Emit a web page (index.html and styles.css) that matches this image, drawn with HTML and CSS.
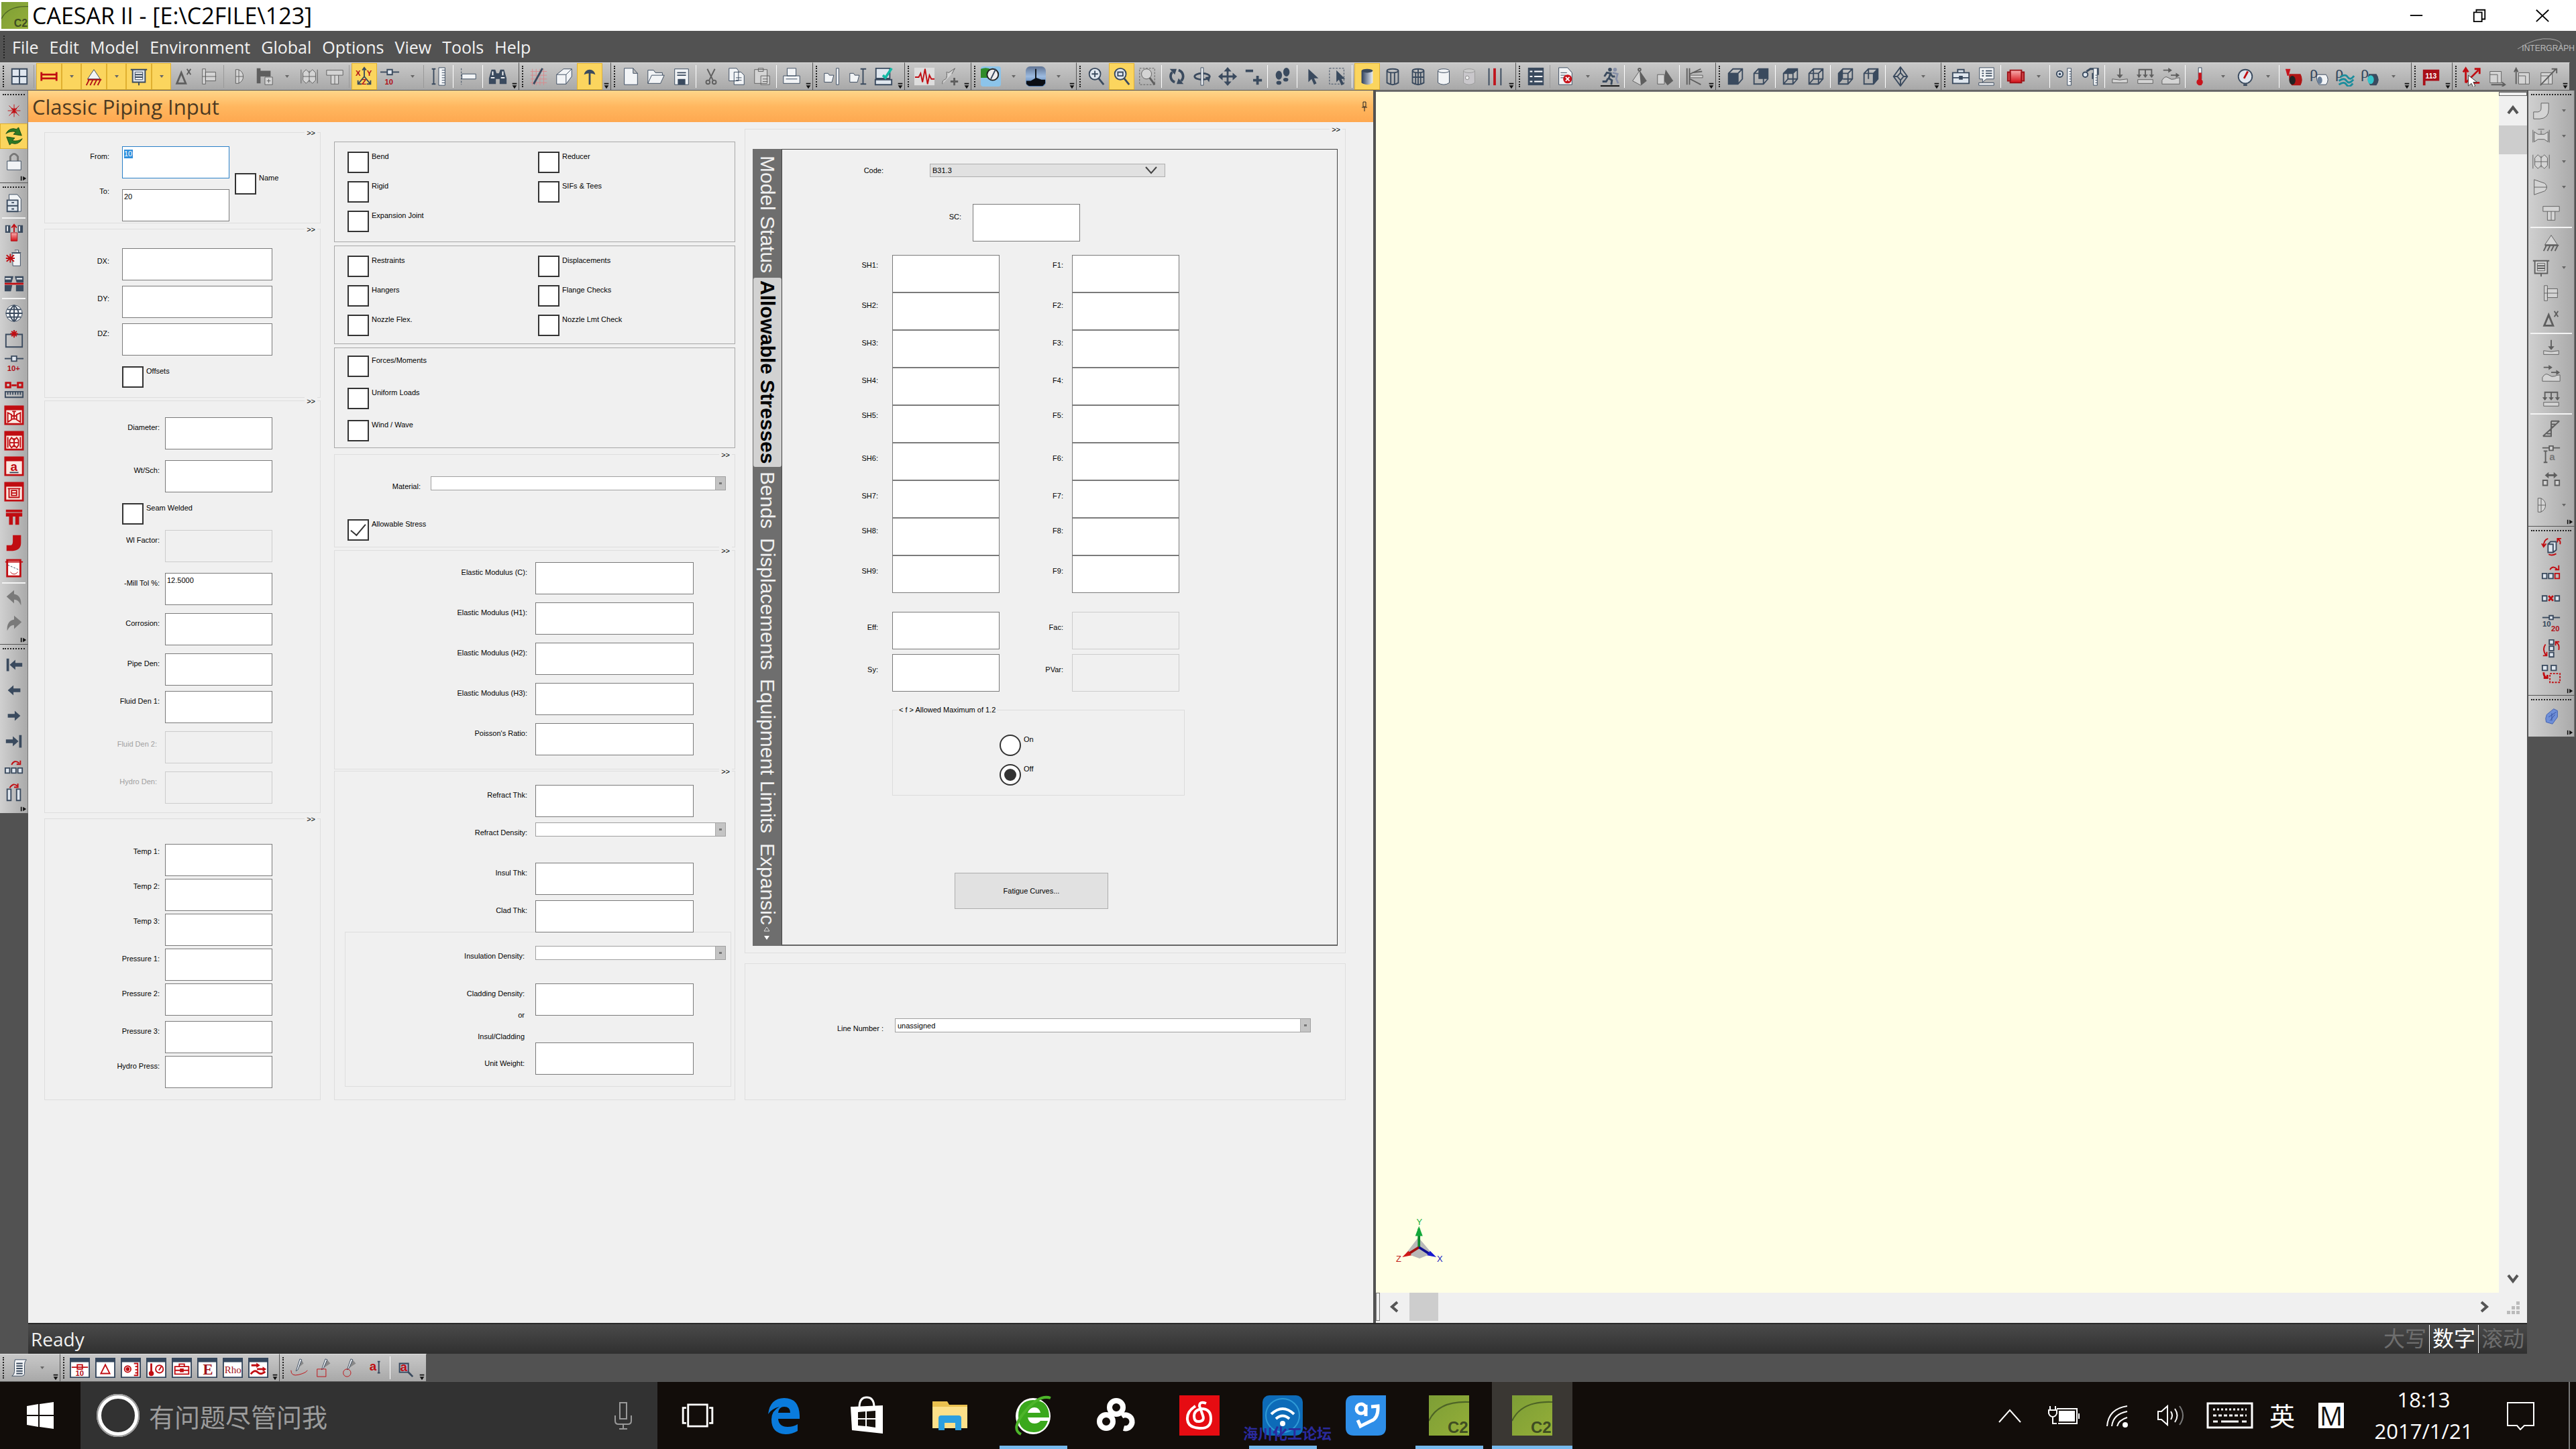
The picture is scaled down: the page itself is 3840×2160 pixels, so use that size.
FILE: index.html
```html
<!DOCTYPE html>
<html lang="zh-CN">
<head>
<meta charset="utf-8">
<title>CAESAR II</title>
<link rel="stylesheet" href="styles.css">
</head>
<body>
<svg class="paints" aria-hidden="true">
<defs>
<linearGradient id="g-cyl"><stop offset="0" stop-color="#2d3f5c"/><stop offset="1" stop-color="#e8eef6"/></linearGradient>
<linearGradient id="g-red" x2="0" y2="1"><stop offset="0" stop-color="#f7b0b0"/><stop offset="1" stop-color="#d40d14"/></linearGradient>
<linearGradient id="g-c2" x2="1" y2="1"><stop offset="0" stop-color="#7d9e36"/><stop offset="1" stop-color="#94ae38"/></linearGradient>
<linearGradient id="g-sky" x2="0" y2="1"><stop offset="0" stop-color="#5f7393"/><stop offset=".5" stop-color="#9dbbe0"/><stop offset="1" stop-color="#3d6ea8"/></linearGradient>
</defs>
</svg>
<svg class="sprite" aria-hidden="true">
<symbol id="win" viewBox="0 0 32 32"><path class="w2" d="M4 4h24v24H4zM16 4v24M4 16h24"/></symbol>
<symbol id="pipe" viewBox="0 0 32 32"><path class="r3" d="M5 13h22M5 19h22M4 9v14M28 9v14"/></symbol>
<symbol id="restr" viewBox="0 0 32 32"><path class="w" d="M16 5l10 15H6z"/><path class="hat" d="M4 30l4-8M10 30l4-8M16 30l4-8M22 30l4-8M6 21h22"/></symbol>
<symbol id="hanger" viewBox="0 0 32 32"><path class="w2" d="M3 5h26M6 5v20h20V5M16 25v5"/><path class="w" d="M10 9h12v12H10z"/><path class="l" d="M10 13h12M10 17h12"/></symbol>
<symbol id="dx" viewBox="0 0 32 32"><path class="l3" d="M5 27L12 10l7 17z"/><path class="l" d="M21 4l6 9M27 4l-6 9"/></symbol>
<symbol id="flange" viewBox="0 0 32 32"><path class="w" d="M5 4h5v24H5zM10 9h16v14H10zM5 16h22"/></symbol>
<symbol id="cap" viewBox="0 0 32 32"><path class="w" d="M11 5h4q8 3 8 11t-8 11h-4zM16 5v22M11 16h12"/></symbol>
<symbol id="flangeadd" viewBox="0 0 32 32"><path class="f" d="M4 3h6v24H4zM10 7h16v9H10z"/><path class="w" d="M17 17h12v12H17zM20 23h6M23 20v6"/></symbol>
<symbol id="bellows" viewBox="0 0 32 32"><path class="w" d="M3 5v22M29 5v22M6 10l5-5 5 5 5-5 5 5v12l-5 5-5-5-5 5-5-5zM16 7v18M6 16h20"/></symbol>
<symbol id="tee" viewBox="0 0 32 32"><path class="w" d="M3 6h26v8h-7v14H10V14H3zM10 14h12M16 14v14"/></symbol>
<symbol id="xyz" viewBox="0 0 32 32"><path class="l" d="M16 3v13L7 27M16 16l9 11M13 6l3-4 3 4M6 22v6h6M26 22v6h-6"/><text class="tr" x="2" y="15">X</text><text class="tr" x="20" y="15">Y</text><text class="tr" x="12" y="29">Z</text></symbol>
<symbol id="node10" viewBox="0 0 32 32"><path class="l" d="M1 9h30"/><path class="w2" d="M12 5h8v8h-8z"/><text class="tr" x="8" y="29">10</text></symbol>
<symbol id="ruler" viewBox="0 0 32 32"><path class="l" d="M8 4v24M5 4h6M5 28h6"/><path class="w" d="M16 2h10v28H16zM21 6h5M21 10h5M21 14h5M21 18h5M21 22h5M21 26h5"/></symbol>
<symbol id="pipeend" viewBox="0 0 32 32"><path class="l dash" d="M5 3v26"/><path class="w" d="M6 12h22v8H6z"/></symbol>
<symbol id="binoc" viewBox="0 0 32 32"><path class="f" d="M6 5h6l2 6h4l2-6h6l4 14v9H19v-8h-6v8H2v-9z"/><path class="wl" d="M5 18h6M21 18h6M8 8v6M24 8v6"/></symbol>
<symbol id="grid" viewBox="0 0 32 32"><path class="pk" d="M6 4v26M12 4v26M18 4v26M24 4v26M3 8h26M3 14h26M3 20h26M3 26h26"/><path class="l3" d="M22 3L8 28"/></symbol>
<symbol id="box" viewBox="0 0 32 32"><path class="w" d="M4 13h15v15H4zM4 13L15 4h13v12L19 28M19 13l9-9"/></symbol>
<symbol id="tmark" viewBox="0 0 32 32"><path class="l3" d="M16 7v22"/><path class="f" d="M7 13q2-8 9-8t9 8q-9-4-18 0z"/></symbol>
<symbol id="doc" viewBox="0 0 32 32"><path class="w" d="M6 3h14l7 8v18H6zM20 3v8h7"/></symbol>
<symbol id="open" viewBox="0 0 32 32"><path class="w" d="M3 27V6h9l3 4h11v4M3 27l6-13h20l-6 13z"/></symbol>
<symbol id="save" viewBox="0 0 32 32"><path class="w" d="M5 4h22v25H5z"/><path class="l" d="M9 10h14M9 14h14"/><path class="f" d="M10 20h12v9H10z"/></symbol>
<symbol id="cut" viewBox="0 0 32 32"><path class="l" d="M10 4l9 18M22 4l-9 18"/><circle class="l" cx="11" cy="25" r="3"/><circle class="l" cx="21" cy="25" r="3"/></symbol>
<symbol id="copy" viewBox="0 0 32 32"><path class="w" d="M4 3h12l3 4v16H4zM12 9h11l5 5v15H12zM15 18h9M15 22h9"/></symbol>
<symbol id="paste" viewBox="0 0 32 32"><path class="w" d="M4 5h20v22H4zM10 3h8v5h-8zM14 15h14v14H14zM17 20h8M17 24h8"/></symbol>
<symbol id="print" viewBox="0 0 32 32"><path class="w" d="M9 3h14v12H9zM3 15h26v12H3zM7 20h18"/></symbol>
<symbol id="fl1" viewBox="0 0 32 32"><path class="w" d="M3 11h6l2 3h7l-3 11H3z"/><path class="w" d="M22 3h4v26h-4z"/></symbol>
<symbol id="fl2" viewBox="0 0 32 32"><path class="w" d="M3 11h6l2 3h7l-3 11H3z"/><path class="l" d="M20 4h9M24 4v24M20 28h9"/></symbol>
<symbol id="chk" viewBox="0 0 32 32"><path class="w2" d="M4 3h22v16H4zM3 21h26v8H3z"/><path d="M15 14l4 4L29 3" fill="none" stroke="#13b9a5" stroke-width="4"/></symbol>
<symbol id="pulse" viewBox="0 0 32 32"><path d="M0 2h32v28H0z" fill="#ddd"/><path class="r" d="M1 17h6l3-6 3 14 4-21 4 24 3-14 3 6h5"/></symbol>
<symbol id="curve" viewBox="0 0 32 32"><path class="w" d="M4 28c0-10 6-4 7-12S8 8 14 10l10-7-5 9"/><path class="l3" d="M23 18v12M17 24h12"/></symbol>
<symbol id="paint" viewBox="0 0 32 32"><rect width="32" height="32" rx="4" fill="#8cc4ea"/><path d="M0 4q10-4 18 2l-4 12H0z" fill="#2f8b2a"/><circle cx="19" cy="13" r="9" fill="#eee" stroke="#222" stroke-width="2"/><path class="l" d="M16 20l8-16"/></symbol>
<symbol id="ship" viewBox="0 0 32 32"><rect width="32" height="32" rx="7" fill="url(#g-sky)"/><path d="M1 23h7l7-4V4h2v14l8 3h6v6l-4 4H5l-4-3z" fill="#0a0e14"/></symbol>
<symbol id="zoomx" viewBox="0 0 32 32"><circle class="w2" cx="14" cy="12" r="9"/><path class="l3" d="M20 19l8 10"/><path class="l" d="M14 7v10M9 12h10"/></symbol>
<symbol id="zoomw" viewBox="0 0 32 32"><circle class="w2" cx="14" cy="12" r="9"/><path class="l3" d="M20 19l8 10"/><path class="l" d="M10 9h8v6h-8z"/></symbol>
<symbol id="zoomd" viewBox="0 0 32 32"><path class="l dash" d="M4 3h24v26H4z"/><circle class="w" cx="15" cy="12" r="8"/><path class="l3" d="M20 18l8 11"/></symbol>
<symbol id="rot" viewBox="0 0 32 32"><path class="l4" d="M13 25A10 10 0 0 1 9 9M19 6a10 10 0 0 1 4 17"/><path class="f" d="M5 4h11l-3 9zM27 28H16l3-9z"/></symbol>
<symbol id="orbit" viewBox="0 0 32 32"><ellipse class="l3" cx="16" cy="16" rx="12" ry="5"/><path class="w" d="M14 2h4v28h-4z"/><path class="f" d="M21 17l6 8 2-9z"/></symbol>
<symbol id="move" viewBox="0 0 32 32"><path class="l3" d="M16 5v22M5 16h22"/><path class="f" d="M16 1l6 7H10zM16 31l6-7H10zM1 16l7-6v12zM31 16l-7-6v12z"/></symbol>
<symbol id="pm" viewBox="0 0 32 32"><path class="l4" d="M4 7h12M23 15v14M16 22h14"/></symbol>
<symbol id="feet" viewBox="0 0 32 32"><ellipse class="f" cx="10" cy="14" rx="5" ry="7"/><ellipse class="f" cx="10" cy="26" rx="4" ry="3"/><ellipse class="f" cx="22" cy="9" rx="5" ry="7"/><ellipse class="f" cx="21" cy="21" rx="4" ry="3"/></symbol>
<symbol id="cur" viewBox="0 0 32 32"><path class="f" d="M10 4v21l5-5 4 9 4-2-4-8h7z"/></symbol>
<symbol id="curd" viewBox="0 0 32 32"><path class="l dash" d="M3 3h23v25H3z"/><path class="f" d="M14 6v19l4-4 4 9 4-2-4-8h6z"/></symbol>
<symbol id="cyl" viewBox="0 0 32 32"><path d="M7 7v19q9 6 18 0V7z" fill="url(#g-cyl)"/><ellipse class="f" cx="16" cy="7" rx="9" ry="3"/></symbol>
<symbol id="cylo" viewBox="0 0 32 32"><path class="l" d="M7 7v19q9 6 18 0V7M13 10v18M19 10v18"/><ellipse class="l" cx="16" cy="7" rx="9" ry="3"/></symbol>
<symbol id="cylg" viewBox="0 0 32 32"><path class="l" d="M7 7v19q9 6 18 0V7M16 4v26M7 17h18M12 10v18M20 10v18"/><ellipse class="l" cx="16" cy="7" rx="9" ry="3"/></symbol>
<symbol id="cylw" viewBox="0 0 32 32"><path class="w" d="M7 7v19q9 6 18 0V7z"/><ellipse class="w" cx="16" cy="7" rx="9" ry="3"/></symbol>
<symbol id="cylt" viewBox="0 0 32 32"><path d="M7 7v19q9 6 18 0V7z" fill="#c9c7cb" stroke="#999"/><ellipse cx="16" cy="7" rx="9" ry="3" fill="#ccc" stroke="#999"/><circle cx="13" cy="18" r="3" fill="#eee" stroke="#888"/></symbol>
<symbol id="lines" viewBox="0 0 32 32"><path class="l" d="M7 3v27M26 3v27"/><path d="M16 3v27" stroke="#c0141c" stroke-width="4"/></symbol>
<symbol id="list" viewBox="0 0 32 32"><path class="f" d="M4 2h25v28H4z"/><path class="wl" d="M7 8h4M7 16h4M7 24h4M14 8h13M14 16h13M14 24h13"/></symbol>
<symbol id="docx" viewBox="0 0 32 32"><path class="w" d="M6 2h14l7 8v19H6zM9 10h10M9 14h8M9 18h6"/><circle cx="20" cy="20" r="7" fill="#c8141c"/><path class="wl" d="M17 17l6 6M23 17l-6 6"/></symbol>
<symbol id="run" viewBox="0 0 32 32"><circle cx="24" cy="5" r="3" fill="#8890a8"/><path d="M20 10l8 2-2 8 3 7" fill="none" stroke="#8890a8" stroke-width="3"/><circle class="f" cx="16" cy="5" r="3"/><path class="l3" d="M7 16l4-6 6 1-3 8 5 3-1 7M13 19l-3 5H4M17 12l3 4h4"/><path d="M1 31h30" stroke="#111" stroke-width="2"/></symbol>
<symbol id="wt" viewBox="0 0 32 32"><circle class="l" cx="16" cy="5" r="2"/><path class="w" d="M16 7l11 16-9 7L5 23z"/><path class="f" d="M16 7l11 16-9 7z"/></symbol>
<symbol id="wtn" viewBox="0 0 32 32"><path class="f" d="M17 5l12 18-9 7-6-8z"/><path class="w" d="M4 13h11v15H4z"/></symbol>
<symbol id="spray" viewBox="0 0 32 32"><path class="l" d="M4 3v26M8 3v26M9 12L26 4M9 20l17 9M12 10L28 8"/><path class="w" d="M9 14h20v4H9z"/></symbol>
<symbol id="cube1" viewBox="0 0 32 32"><path class="w3" d="M5 11l7-7h15v16l-7 8H5zM20 11l7-7M20 11v17M5 11h15"/><path class="f" d="M5 11h15v17H5z"/></symbol>
<symbol id="cube2" viewBox="0 0 32 32"><path class="w3" d="M5 11l7-7h15v16l-7 8H5zM20 11l7-7M20 11v17M5 11h15"/><path class="f" d="M12 4h15v16H12z"/></symbol>
<symbol id="cube3" viewBox="0 0 32 32"><path class="w3" d="M5 11l7-7h15v16l-7 8H5zM20 11l7-7M20 11v17M5 11h15M12 4v16h15M12 20l-7 8"/><path class="f" d="M5 11l7-7h15l-7 7z"/></symbol>
<symbol id="cube4" viewBox="0 0 32 32"><path class="w3" d="M5 11l7-7h15v16l-7 8H5zM20 11l7-7M20 11v17M5 11h15M12 4v16h15M12 20l-7 8"/></symbol>
<symbol id="cube5" viewBox="0 0 32 32"><path class="w3" d="M5 11l7-7h15v16l-7 8H5zM20 11l7-7M20 11v17M5 11h15M12 20h15"/><path class="f" d="M5 11l7-7v16l-7 8z"/></symbol>
<symbol id="cube6" viewBox="0 0 32 32"><path class="w3" d="M5 11l7-7h15v16l-7 8H5zM20 11l7-7M20 11v17M5 11h15M12 4v16"/><path class="f" d="M20 11l7-7v16l-7 8z"/></symbol>
<symbol id="dia" viewBox="0 0 32 32"><path class="w3" d="M16 1l11 15-11 15L5 16zM16 10l5 6-5 6-5-6zM16 1v9M16 22v9M5 16h6M21 16h6"/></symbol>
<symbol id="case" viewBox="0 0 32 32"><path class="w2" d="M3 10h26v17H3zM11 10V5h10v5M3 18h26M14 16h4v4h-4z"/></symbol>
<symbol id="note" viewBox="0 0 32 32"><path class="w" d="M5 2h23v18H16l-6 5v-5H5zM4 26h24v4H4z"/><path class="l" d="M9 7h3M15 7h10M9 11h3M15 11h10M9 15h3M15 15h10"/></symbol>
<symbol id="barrel" viewBox="0 0 32 32"><path d="M7 6h18v20H7z" fill="url(#g-red)" stroke="#9c1016" stroke-width="2"/><path d="M3 9h4v14H3zM25 9h4v14h-4z" fill="#d64a4e" stroke="#9c1016" stroke-width="2"/></symbol>
<symbol id="rul2" viewBox="0 0 32 32"><circle class="w2" cx="8" cy="12" r="5"/><circle class="f" cx="8" cy="12" r="2"/><path class="w" d="M20 3h6v27h-6zM23 8h3M23 12h3M23 16h3M23 20h3M23 24h3"/></symbol>
<symbol id="rul3" viewBox="0 0 32 32"><circle class="w2" cx="8" cy="13" r="4"/><path class="l3" d="M10 8l6-4h12v8h-8v8"/><path class="w" d="M21 3h6v27h-6zM24 14h3M24 18h3M24 22h3M24 26h3"/></symbol>
<symbol id="dn" viewBox="0 0 32 32"><path class="l" d="M16 3v13"/><path class="f" d="M11 13h10l-5 6z"/><path class="w" d="M4 20q12 3 24 0v6H4z"/></symbol>
<symbol id="dn3" viewBox="0 0 32 32"><path class="l" d="M5 5h22M6 5v12M16 5v12M26 5v12"/><path class="f" d="M2 13h8l-4 5zM12 13h8l-4 5zM22 13h8l-4 5z"/><path class="w" d="M4 21h24v6H4z"/></symbol>
<symbol id="wind" viewBox="0 0 32 32"><path class="l" d="M4 6h12M16 14h12"/><path class="f" d="M12 2l6 4-6 4zM24 10l6 4-6 4z"/><path class="w" d="M2 28v-6q5-8 10-4t10 2q3-2 8-2v10z"/></symbol>
<symbol id="therm" viewBox="0 0 32 32"><path class="w" d="M13 2h5v18h-5z"/><path d="M13 10h5v20h-5z" fill="#c8141c"/><circle cx="15" cy="25" r="5" fill="#c8141c"/></symbol>
<symbol id="gauge" viewBox="0 0 32 32"><circle class="w2" cx="16" cy="16" r="11"/><path class="r3" d="M14 19l6-11"/><path class="f" d="M13 28h6v3h-6z"/></symbol>
<symbol id="ring1" viewBox="0 0 32 32"><path d="M2 4h8l-3 11H5z" fill="#c8141c"/><path d="M8 12h18q5 9 0 18H12q-6-9-4-18z" fill="#b01515"/><ellipse cx="13" cy="22" rx="5" ry="7" fill="#222"/></symbol>
<symbol id="ring2" viewBox="0 0 32 32"><text class="rho" x="0" y="18">ρ</text><path class="w" d="M12 13h14q6 8 0 16H15q-6-8-3-16z"/><ellipse cx="16" cy="22" rx="4" ry="6" fill="#6a7f98"/></symbol>
<symbol id="ring3" viewBox="0 0 32 32"><text class="rho" x="0" y="18">ρ</text><path d="M8 17q8-6 12 0t10-2M6 23q8-6 12 0t11-2M6 29q8-6 12 0t10-2" fill="none" stroke="#1b8d9c" stroke-width="3"/></symbol>
<symbol id="ring4" viewBox="0 0 32 32"><text class="rho" x="0" y="18">ρ</text><path class="f" d="M13 12h12q7 9 0 18H15q-6-9-2-18z"/><ellipse cx="16" cy="21" rx="5" ry="7" fill="#35c3c9"/></symbol>
<symbol id="flag" viewBox="0 0 32 32"><path d="M3 5h26v18H7v7H3z" fill="#a90f18"/><text class="tw" x="7" y="19">113</text></symbol>
<symbol id="ax" viewBox="0 0 32 32"><path class="r3" d="M6 26V5M6 26L26 6M10 26h18M2 9l4-6 4 6M20 4h8v8"/><path d="M10 14v17l5-4 3 6 3-2-3-6h6z" fill="#fff" stroke="#333"/></symbol>
<symbol id="sq1" viewBox="0 0 32 32"><path class="w" d="M4 8h18v18H4zM4 13h12v13"/><path class="l" d="M6 29h20M23 25l5 4-5 3"/></symbol>
<symbol id="sq2" viewBox="0 0 32 32"><path class="w" d="M9 10h17v18H9zM9 15h11v13"/><path class="l" d="M5 28V5M2 9l3-6 3 6"/></symbol>
<symbol id="sq3" viewBox="0 0 32 32"><path class="w" d="M4 10h18v18H4zM4 15h12v13"/><path class="l" d="M3 30L28 4M21 4h8v7"/></symbol>
<symbol id="star" viewBox="0 0 32 32"><path class="r1" d="M16 6v20M8 8l16 16M24 8L8 24M6 16h20"/><path class="r" d="M16 12v8M12 12l8 8M20 12l-8 8"/></symbol>
<symbol id="refresh" viewBox="0 0 32 32"><path d="M3 12q6-11 17-7l3-3 5 13-13-2 4-4q-9-2-16 3zM29 20q-6 11-17 7l-3 3-5-13 13 2-4 4q9 2 16-3z" fill="#2c7a26" stroke="#174a14"/></symbol>
<symbol id="lock" viewBox="0 0 32 32"><path d="M10 15V8q6-9 12 0v7" fill="none" stroke="#777" stroke-width="3"/><path class="w" d="M5 15h22v14H5z"/></symbol>
<symbol id="cab" viewBox="0 0 32 32"><path class="w" d="M8 2h13l6 7v20H12M8 2v8"/><path class="w2" d="M5 11h17v18H5zM5 20h17M12 15h4M12 25h4"/></symbol>
<symbol id="ins" viewBox="0 0 32 32"><path class="f" d="M2 4h8v12H2zM22 4h8v12h-8z"/><path class="w" d="M4 5h3v9H4zM23 5h3v9h-3z"/><path d="M11 16h10v13H11z" fill="url(#g-red)" stroke="#b01018"/><path class="r" d="M16 15V4M12 8l4-5 4 5"/></symbol>
<symbol id="del" viewBox="0 0 32 32"><path class="w" d="M13 8h13v20H14zM12 7h15M17 3h6v4"/><path class="r" d="M10 9v14M4 11l12 10M16 11L4 21M3 16h14"/></symbol>
<symbol id="brk" viewBox="0 0 32 32"><path class="f" d="M1 4h14l-3 10H1zM17 4h14v10H20zM1 18h12l-2 10H1zM19 18h12v10H19z"/><path class="wl" d="M2 8h9M20 8h9"/><path class="r3" d="M1 16h30"/></symbol>
<symbol id="globe" viewBox="0 0 32 32"><circle class="w" cx="16" cy="16" r="13"/><path class="l" d="M16 3v26M3 16h26M16 3q-14 13 0 26M16 3q14 13 0 26M5 10h22M5 22h22"/></symbol>
<symbol id="boxs" viewBox="0 0 32 32"><path class="w3" d="M3 9h26v20H3z"/><path class="r" d="M16 2v12M10 8h12M12 4l8 8M20 4l-8 8"/></symbol>
<symbol id="node11" viewBox="0 0 32 32"><path class="l" d="M1 7h30"/><path class="w2" d="M12 3h8v8h-8z"/><text class="tr" x="5" y="27">10+</text></symbol>
<symbol id="meas" viewBox="0 0 32 32"><path class="r3" d="M3 5h7v7H3zM22 5h7v7h-7zM12 9h8"/><path class="l" d="M2 19h28v9H2zM6 19v5M10 19v5M14 19v5M18 19v5M22 19v5M26 19v5"/></symbol>
<symbol id="rbox" viewBox="0 0 32 32"><path d="M2 2h28v28H2z" fill="#fbe9e2" stroke="#c00d12" stroke-width="3"/><path d="M1 1h30v7H1z" fill="#c00d12"/></symbol>
<symbol id="rv" viewBox="0 0 32 32"><use href="#rbox"/><path class="r" d="M6 12l6 3v8l-6 4zM26 12l-6 3v8l6 4zM12 17h8M12 22h8M16 9v14M13 10h6"/></symbol>
<symbol id="rb" viewBox="0 0 32 32"><use href="#rbox"/><path class="r" d="M6 10v17M26 10v17M9 15l3-4 4 4 4-4 3 4v8l-3 4-4-4-4 4-3-4zM16 12v14M9 19h14"/></symbol>
<symbol id="ra" viewBox="0 0 32 32"><use href="#rbox"/><text class="ta" x="10" y="23">a</text><path class="l" d="M9 26h14"/></symbol>
<symbol id="rh" viewBox="0 0 32 32"><use href="#rbox"/><path class="r" d="M6 11h20M8 11v14h16V11M12 14h8v8h-8zM12 18h8"/></symbol>
<symbol id="rt" viewBox="0 0 32 32"><path d="M3 4h26v4H3zM3 9h26v6h-5v13h-6V15h-4v13H8V15H3z" fill="#c00d12"/></symbol>
<symbol id="rj" viewBox="0 0 32 32"><path d="M14 4h13v12q0 12-13 13H4v-9h7q3-1 3-6z" fill="#c00d12"/></symbol>
<symbol id="rd" viewBox="0 0 32 32"><path d="M5 3h21v26H5z" fill="#fff" stroke="#c00d12" stroke-width="3"/><path class="r" d="M2 6h28"/><path class="l dash" d="M6 11l19 8"/><path class="r1" d="M10 22q6 7 12 0"/></symbol>
<symbol id="undo" viewBox="0 0 32 32"><path d="M4 14L16 4v6q12 2 11 18-4-9-11-9v6z" fill="#7a7a7a"/></symbol>
<symbol id="redo" viewBox="0 0 32 32"><path d="M28 14L16 4v6Q4 12 5 28q4-9 11-9v6z" fill="#7a7a7a"/></symbol>
<symbol id="first" viewBox="0 0 32 32"><path class="f" d="M4 6h4v20H4zM9 16l9-8v5h11v6H18v5z"/></symbol>
<symbol id="prev" viewBox="0 0 32 32"><path class="f" d="M6 16l9-8v5h11v6H15v5z"/></symbol>
<symbol id="next" viewBox="0 0 32 32"><path class="f" d="M26 16l-9-8v5H6v6h11v5z"/></symbol>
<symbol id="last" viewBox="0 0 32 32"><path class="f" d="M28 6h-4v20h4zM23 16l-9-8v5H3v6h11v5z"/></symbol>
<symbol id="seq" viewBox="0 0 32 32"><path class="w2" d="M2 18h7v8H2zM12 18h7v8h-7zM22 18h7v8h-7z"/><path class="r" d="M12 13q4-9 12-3M20 12h6V6"/></symbol>
<symbol id="par" viewBox="0 0 32 32"><path class="w2" d="M5 11h6v18H5zM20 11h6v18h-6z"/><path class="r" d="M9 9q6-9 12-3M16 8h6V2"/></symbol>
<symbol id="elbow" viewBox="0 0 32 32"><path class="w" d="M16 4h12v10q0 14-14 15H4V18h7q5-1 5-6z"/></symbol>
<symbol id="valve" viewBox="0 0 32 32"><path class="w" d="M3 6v20M29 6v20M5 9l6 4h10l6-4v16l-6-4H11l-6 4zM16 13V7M11 5h10"/></symbol>
<symbol id="reduc" viewBox="0 0 32 32"><path class="w" d="M5 4l17 6q6 6 0 12L5 28zM5 16h20"/></symbol>
<symbol id="slash" viewBox="0 0 32 32"><path class="l" d="M3 28L29 4M16 4h13M16 4v24H3M16 9h7M16 13h4M12 19h4M9 24h7"/></symbol>
<symbol id="nodea" viewBox="0 0 32 32"><path class="l" d="M2 6h28M7 11v18M4 11h6M4 29h6"/><path class="w2" d="M13 3h6v7h-6z"/><text class="tg" x="13" y="26">a</text></symbol>
<symbol id="dist" viewBox="0 0 32 32"><path class="w2" d="M3 17h7v8H3zM22 17h7v8h-7z"/><path class="l3" d="M9 9h14"/><path class="f" d="M12 4v10L6 9zM20 4v10l6-5z"/></symbol>
<symbol id="rcube" viewBox="0 0 32 32"><path class="w2" d="M11 12l4-4h9v13l-5 4h-8zM11 12h8v13"/><path class="r" d="M11 3Q4 5 4 15M1 11l3 5 4-5M30 12q2-6-4-8M26 9V3h6M12 28q5 3 12-1"/></symbol>
<symbol id="seqr" viewBox="0 0 32 32"><path class="w2" d="M2 18h7v8H2zM12 18h7v8h-7z"/><path class="r" d="M22 18h7v8h-7zM14 12q5-8 12 0M22 12h6V5"/></symbol>
<symbol id="seqx" viewBox="0 0 32 32"><path class="w2" d="M2 13h7v8H2zM22 13h7v8h-7z"/><path class="r3" d="M12 13l7 8M19 13l-7 8"/></symbol>
<symbol id="n1020" viewBox="0 0 32 32"><path class="l" d="M2 7h28"/><path class="w2" d="M13 4h6v6h-6z"/><text class="ts" x="2" y="21">10</text><text class="tr" x="16" y="29">20</text></symbol>
<symbol id="vseq" viewBox="0 0 32 32"><path class="w2" d="M13 2h7v7h-7zM13 12h7v7h-7zM13 22h7v7h-7z"/><path class="r" d="M7 9Q1 17 8 27M3 27h6v-6M28 18q2-10-5-12M23 11V5h6"/></symbol>
<symbol id="blk" viewBox="0 0 32 32"><path class="w2" d="M2 2h8v8H2zM16 2h8v8h-8z"/><path class="r3" d="M4 13q0 8 6 9M4 22h6v-5"/><path d="M14 15h16v14H14z" fill="none" stroke="#c00d12" stroke-width="2" stroke-dasharray="3 2"/></symbol>
<symbol id="gem" viewBox="0 0 32 32"><path d="M9 14L20 5l6 3v10l-8 11-10-3q-2-6 1-12z" fill="#6f8fd8" stroke="#4060b0"/><path d="M12 18l12-8M14 24l8-10M17 12v12" stroke="#3350a0" fill="none"/></symbol>
<symbol id="scroll" viewBox="0 0 32 32"><path class="w" d="M9 3h18q-3 3-3 8v14q0 4-4 4H4q4-2 4-7V8z"/><path class="l" d="M11 9h10M11 13h10M11 17h10M11 21h10M11 25h10"/></symbol>
<symbol id="bbox" viewBox="0 0 32 32"><path d="M1 1h30v30H1z" fill="#fff" stroke="#34465c" stroke-width="2"/><path d="M1 1h30v6H1z" fill="#34465c"/></symbol>
<symbol id="b1" viewBox="0 0 32 32"><use href="#bbox"/><path class="r" d="M3 15h26M12 11h8v7h-8z"/><text class="tr" x="9" y="29">10</text></symbol>
<symbol id="b2" viewBox="0 0 32 32"><use href="#bbox"/><path class="r" d="M9 25l7-14 7 14z"/></symbol>
<symbol id="b3" viewBox="0 0 32 32"><use href="#bbox"/><circle class="r" cx="11" cy="18" r="5"/><circle cx="11" cy="18" r="3" fill="#c00d12"/><path class="r" d="M21 9h6v19h-6M23 14h4M23 19h4M23 24h4"/></symbol>
<symbol id="b4" viewBox="0 0 32 32"><use href="#bbox"/><path class="r3" d="M8 9v16"/><circle cx="8" cy="25" r="4" fill="#c00d12"/><circle class="r" cx="21" cy="18" r="6"/><path class="r" d="M20 20l4-6"/></symbol>
<symbol id="b5" viewBox="0 0 32 32"><use href="#bbox"/><path class="r" d="M5 14h22v12H5zM12 14v-4h8v4M5 20h22M14 18h4v4h-4z"/></symbol>
<symbol id="b6" viewBox="0 0 32 32"><use href="#bbox"/><text class="te" x="9" y="27">E</text></symbol>
<symbol id="b7" viewBox="0 0 32 32"><use href="#bbox"/><text class="trh" x="3" y="25">Rho</text></symbol>
<symbol id="b8" viewBox="0 0 32 32"><use href="#bbox"/><path class="r3" d="M5 12h9M14 18h10M4 26q6-8 11-3t12-1"/><path d="M13 8l6 4-6 4zM23 14l6 4-6 4z" fill="#c00d12"/></symbol>
<symbol id="p1" viewBox="0 0 32 32"><path d="M19 2l-6 15 10-8z" fill="#888"/><path class="w" d="M17 2l3 1-6 16-3 2z"/><path class="r1" d="M3 20q0 10 12 7t14-7"/></symbol>
<symbol id="p2" viewBox="0 0 32 32"><path d="M19 2l-6 15 12-8z" fill="#888"/><path class="w" d="M17 2l3 1-6 14-3 2z"/><path class="r1" d="M4 18h14v12H4z"/></symbol>
<symbol id="p3" viewBox="0 0 32 32"><path d="M19 2l-6 15 12-8z" fill="#888"/><path class="w" d="M17 2l3 1-6 14-3 2z"/><circle class="r1" cx="11" cy="24" r="6"/></symbol>
<symbol id="p4" viewBox="0 0 32 32"><text class="ta" x="6" y="20">a</text><path class="l" d="M21 6v18M19 6h4M19 24h4"/></symbol>
<symbol id="p5" viewBox="0 0 32 32"><path d="M7 9h14v14H7z" fill="#a9b4c4" stroke="#34465c" stroke-width="2"/><text class="ta" x="8" y="21">a</text><path class="l3" d="M21 23l7 7"/></symbol>
<symbol id="ov" viewBox="0 0 12 12"><path d="M2 1h8v2H2zM2 5h8L6 11z" fill="#111"/></symbol>
<symbol id="c2" viewBox="0 0 60 60"><path d="M0 0h60v60H0z" fill="url(#g-c2)"/><path d="M0 38Q14 8 60 10" fill="none" stroke="#4d6426" stroke-width="2"/><text class="c2t" x="28" y="56">C2</text></symbol>
</svg>

<header class="titlebar">
  <svg class="applogo" aria-hidden="true"><use href="#c2"/></svg>
  <h1>CAESAR II - [E:\C2FILE\123]</h1>
  <div class="winbtns">
    <button aria-label="Minimize"><svg viewBox="0 0 24 24"><path d="M2 12h20"/></svg></button>
    <button aria-label="Restore"><svg viewBox="0 0 24 24"><path d="M3 7h13v15H3zM7 7V3h14v15h-5"/></svg></button>
    <button aria-label="Close"><svg viewBox="0 0 24 24"><path d="M2 3l20 19M22 3L2 22"/></svg></button>
  </div>
</header>

<nav class="menubar">
  <i class="grip"></i>
  <button>File</button><button>Edit</button><button>Model</button><button>Environment</button><button>Global</button><button>Options</button><button>View</button><button>Tools</button><button>Help</button>
  <div class="brand"><svg viewBox="0 0 86 20" aria-hidden="true"><path d="M1 18Q28 0 50 3t14 15" /></svg><span>INTERGRAPH</span></div>
</nav>

<div class="toolbar" role="toolbar">
  <div class="sec"><i class="grip"></i>
    <button class="tb" aria-label="Windows"><svg><use href="#win"/></svg></button><i class="sp"></i>
    <button class="tb on" aria-label="Anchors"><svg><use href="#pipe"/></svg></button><button class="dd on" aria-label="More anchors"></button>
    <button class="tb on" aria-label="Restraints"><svg><use href="#restr"/></svg></button><button class="dd on" aria-label="More restraints"></button>
    <button class="tb on" aria-label="Hangers"><svg><use href="#hanger"/></svg></button><button class="dd on" aria-label="More hangers"></button>
    <button class="tb dim" aria-label="Displacements"><svg><use href="#dx"/></svg></button>
    <button class="tb dim" aria-label="Flanges"><svg><use href="#flange"/></svg></button><i class="sp"></i>
    <button class="tb dim" aria-label="Caps"><svg><use href="#cap"/></svg></button>
    <button class="tb dim" aria-label="Nozzles"><svg><use href="#flangeadd"/></svg></button><button class="dd dim" aria-label="More nozzles"></button>
    <button class="tb dim" aria-label="Joints"><svg><use href="#bellows"/></svg></button>
    <button class="tb dim" aria-label="Tees"><svg><use href="#tee"/></svg></button><i class="sp"></i>
    <button class="tb on" aria-label="Compass"><svg><use href="#xyz"/></svg></button>
    <button class="tb" aria-label="Node numbers"><svg><use href="#node10"/></svg></button><button class="dd" aria-label="More node numbers"></button><i class="sp"></i>
    <button class="tb" aria-label="Lengths"><svg><use href="#ruler"/></svg></button><i class="sp lt"></i>
    <button class="tb" aria-label="Tie-ins"><svg><use href="#pipeend"/></svg></button><i class="sp lt"></i>
    <button class="tb" aria-label="Find"><svg><use href="#binoc"/></svg></button><svg class="ov"><use href="#ov"/></svg>
  </div>
  <div class="sec"><i class="grip"></i>
    <button class="tb" aria-label="Grid"><svg><use href="#grid"/></svg></button>
    <button class="tb" aria-label="Box"><svg><use href="#box"/></svg></button>
    <button class="tb on" aria-label="Mark"><svg><use href="#tmark"/></svg></button><svg class="ov"><use href="#ov"/></svg>
  </div>
  <div class="sec"><i class="grip"></i>
    <button class="tb" aria-label="New"><svg><use href="#doc"/></svg></button>
    <button class="tb" aria-label="Open"><svg><use href="#open"/></svg></button>
    <button class="tb" aria-label="Save"><svg><use href="#save"/></svg></button><i class="sp lt"></i>
    <button class="tb dim" aria-label="Cut"><svg><use href="#cut"/></svg></button>
    <button class="tb" aria-label="Copy"><svg><use href="#copy"/></svg></button>
    <button class="tb dim" aria-label="Paste"><svg><use href="#paste"/></svg></button><i class="sp lt"></i>
    <button class="tb" aria-label="Print"><svg><use href="#print"/></svg></button><svg class="ov"><use href="#ov"/></svg>
  </div>
  <div class="sec"><i class="grip"></i>
    <button class="tb" aria-label="Import"><svg><use href="#fl1"/></svg></button>
    <button class="tb" aria-label="Export"><svg><use href="#fl2"/></svg></button>
    <button class="tb" aria-label="Check"><svg><use href="#chk"/></svg></button><svg class="ov"><use href="#ov"/></svg>
  </div>
  <div class="sec"><i class="grip"></i>
    <button class="tb" aria-label="Pulse"><svg><use href="#pulse"/></svg></button>
    <button class="tb dim" aria-label="Curve"><svg><use href="#curve"/></svg></button><svg class="ov"><use href="#ov"/></svg>
  </div>
  <div class="sec"><i class="grip"></i>
    <button class="tb" aria-label="Material"><svg><use href="#paint"/></svg></button><button class="dd" aria-label="More materials"></button>
    <button class="tb" aria-label="Marine"><svg><use href="#ship"/></svg></button><button class="dd" aria-label="More marine"></button><svg class="ov"><use href="#ov"/></svg>
  </div>
  <div class="sec"><i class="grip"></i>
    <button class="tb" aria-label="Zoom extents"><svg><use href="#zoomx"/></svg></button>
    <button class="tb on" aria-label="Zoom window"><svg><use href="#zoomw"/></svg></button>
    <button class="tb dim" aria-label="Zoom selection"><svg><use href="#zoomd"/></svg></button><i class="sp lt"></i>
    <button class="tb" aria-label="Rotate"><svg><use href="#rot"/></svg></button>
    <button class="tb" aria-label="Orbit"><svg><use href="#orbit"/></svg></button>
    <button class="tb" aria-label="Pan"><svg><use href="#move"/></svg></button>
    <button class="tb" aria-label="Zoom"><svg><use href="#pm"/></svg></button><i class="sp lt"></i>
    <button class="tb" aria-label="Walk"><svg><use href="#feet"/></svg></button><i class="sp lt"></i>
    <button class="tb" aria-label="Select"><svg><use href="#cur"/></svg></button>
    <button class="tb" aria-label="Select area"><svg><use href="#curd"/></svg></button><i class="sp lt"></i>
    <button class="tb on" aria-label="Shaded"><svg><use href="#cyl"/></svg></button>
    <button class="tb" aria-label="Outline"><svg><use href="#cylo"/></svg></button>
    <button class="tb" aria-label="Wireframe"><svg><use href="#cylg"/></svg></button>
    <button class="tb" aria-label="Hidden line"><svg><use href="#cylw"/></svg></button>
    <button class="tb" aria-label="Translucent"><svg><use href="#cylt"/></svg></button>
    <button class="tb" aria-label="Centerline"><svg><use href="#lines"/></svg></button><svg class="ov"><use href="#ov"/></svg>
  </div>
  <div class="sec"><i class="grip"></i>
    <button class="tb" aria-label="List"><svg><use href="#list"/></svg></button><i class="sp"></i>
    <button class="tb" aria-label="Error check"><svg><use href="#docx"/></svg></button><button class="dd" aria-label="More checks"></button>
    <button class="tb" aria-label="Run"><svg><use href="#run"/></svg></button><i class="sp lt"></i>
    <button class="tb dim" aria-label="Weight"><svg><use href="#wt"/></svg></button>
    <button class="tb dim" aria-label="Weight report"><svg><use href="#wtn"/></svg></button><i class="sp lt"></i>
    <button class="tb dim" aria-label="Spray"><svg><use href="#spray"/></svg></button><svg class="ov"><use href="#ov"/></svg>
  </div>
  <div class="sec cubes"><i class="grip"></i>
    <button class="tb" aria-label="Front"><svg><use href="#cube1"/></svg></button>
    <button class="tb" aria-label="Back"><svg><use href="#cube2"/></svg></button><i class="sp lt"></i>
    <button class="tb" aria-label="Top"><svg><use href="#cube3"/></svg></button>
    <button class="tb" aria-label="Bottom"><svg><use href="#cube4"/></svg></button><i class="sp lt"></i>
    <button class="tb" aria-label="Left"><svg><use href="#cube5"/></svg></button>
    <button class="tb" aria-label="Right"><svg><use href="#cube6"/></svg></button><i class="sp lt"></i>
    <button class="tb" aria-label="Isometric"><svg><use href="#dia"/></svg></button><button class="dd" aria-label="More views"></button><svg class="ov"><use href="#ov"/></svg>
  </div>
  <div class="sec"><i class="grip"></i>
    <button class="tb" aria-label="Materials"><svg><use href="#case"/></svg></button>
    <button class="tb" aria-label="Line notes"><svg><use href="#note"/></svg></button><i class="sp lt"></i>
    <button class="tb" aria-label="Insulation"><svg><use href="#barrel"/></svg></button><button class="dd" aria-label="More insulation"></button><i class="sp lt"></i>
    <button class="tb" aria-label="Diameters"><svg><use href="#rul2"/></svg></button>
    <button class="tb" aria-label="Wall thickness"><svg><use href="#rul3"/></svg></button><i class="sp lt"></i>
    <button class="tb dim" aria-label="Forces"><svg><use href="#dn"/></svg></button>
    <button class="tb dim" aria-label="Uniform loads"><svg><use href="#dn3"/></svg></button>
    <button class="tb dim" aria-label="Wind"><svg><use href="#wind"/></svg></button><i class="sp lt"></i>
    <button class="tb" aria-label="Temperatures"><svg><use href="#therm"/></svg></button><button class="dd" aria-label="More temperatures"></button>
    <button class="tb" aria-label="Pressures"><svg><use href="#gauge"/></svg></button><button class="dd" aria-label="More pressures"></button><i class="sp lt"></i>
    <button class="tb" aria-label="Corrosion"><svg><use href="#ring1"/></svg></button>
    <button class="tb" aria-label="Pipe density"><svg><use href="#ring2"/></svg></button>
    <button class="tb" aria-label="Fluid density"><svg><use href="#ring3"/></svg></button>
    <button class="tb" aria-label="Insulation density"><svg><use href="#ring4"/></svg></button><button class="dd" aria-label="More densities"></button><svg class="ov"><use href="#ov"/></svg>
  </div>
  <div class="sec"><i class="grip"></i>
    <button class="tb" aria-label="Line number"><svg><use href="#flag"/></svg></button><svg class="ov"><use href="#ov"/></svg>
  </div>
  <div class="sec"><i class="grip"></i>
    <button class="tb" aria-label="Axes"><svg><use href="#ax"/></svg></button>
    <button class="tb dim" aria-label="Plane X"><svg><use href="#sq1"/></svg></button>
    <button class="tb dim" aria-label="Plane Y"><svg><use href="#sq2"/></svg></button>
    <button class="tb dim" aria-label="Plane Z"><svg><use href="#sq3"/></svg></button><svg class="ov"><use href="#ov"/></svg>
  </div>
</div>

<main class="main">
  <aside class="side left">
    <div class="sec v"><i class="grip"></i>
      <button class="tb" aria-label="Burst"><svg><use href="#star"/></svg></button>
      <button class="tb on" aria-label="Refresh"><svg><use href="#refresh"/></svg></button>
      <button class="tb" aria-label="Lock"><svg><use href="#lock"/></svg></button><svg class="ov"><use href="#ov"/></svg>
    </div>
    <div class="sec v"><i class="grip"></i>
      <button class="tb" aria-label="Files"><svg><use href="#cab"/></svg></button><i class="sp lt"></i>
      <button class="tb" aria-label="Insert element"><svg><use href="#ins"/></svg></button>
      <button class="tb" aria-label="Delete element"><svg><use href="#del"/></svg></button>
      <button class="tb" aria-label="Break"><svg><use href="#brk"/></svg></button><i class="sp lt"></i>
      <button class="tb" aria-label="Global"><svg><use href="#globe"/></svg></button>
      <button class="tb" aria-label="Special parameters"><svg><use href="#boxs"/></svg></button>
      <button class="tb" aria-label="Increment"><svg><use href="#node11"/></svg></button>
      <button class="tb" aria-label="Distance"><svg><use href="#meas"/></svg></button>
      <button class="tb" aria-label="Valve database"><svg><use href="#rv"/></svg></button>
      <button class="tb" aria-label="Joint database"><svg><use href="#rb"/></svg></button>
      <button class="tb" aria-label="Title"><svg><use href="#ra"/></svg></button>
      <button class="tb" aria-label="Hanger data"><svg><use href="#rh"/></svg></button>
      <button class="tb" aria-label="Tee data"><svg><use href="#rt"/></svg></button>
      <button class="tb" aria-label="Bend data"><svg><use href="#rj"/></svg></button>
      <button class="tb" aria-label="Report"><svg><use href="#rd"/></svg></button><i class="sp lt"></i>
      <button class="tb" aria-label="Undo"><svg><use href="#undo"/></svg></button>
      <button class="tb" aria-label="Redo"><svg><use href="#redo"/></svg></button><svg class="ov"><use href="#ov"/></svg>
    </div>
    <div class="sec v"><i class="grip"></i>
      <button class="tb" aria-label="First"><svg><use href="#first"/></svg></button>
      <button class="tb" aria-label="Previous"><svg><use href="#prev"/></svg></button>
      <button class="tb" aria-label="Next"><svg><use href="#next"/></svg></button>
      <button class="tb" aria-label="Last"><svg><use href="#last"/></svg></button>
      <button class="tb" aria-label="Continue"><svg><use href="#seq"/></svg></button>
      <button class="tb" aria-label="Duplicate"><svg><use href="#par"/></svg></button><svg class="ov"><use href="#ov"/></svg>
    </div>
  </aside>

  <div class="center">
    <div class="work">
      <section class="panel">
        <header class="panelhead"><h2>Classic Piping Input</h2><button class="pin" aria-label="Pin"><svg viewBox="0 0 8 16"><path d="M2 1h4v7H2zM0 9h8M4 9v6"/></svg></button></header>
        <form class="form">
          <div class="col cola">
            <div class="grp nodes"><button type="button" class="more" aria-label="Node details">&gt;&gt;</button>
              <div class="lbls"><label for="from">From:</label><label for="to">To:</label></div>
              <div class="ins"><input id="from" class="sel" value="10"><input id="to" value="20"></div>
              <label class="ck"><input type="checkbox">Name</label>
            </div>
            <div class="grp deltas tight"><button type="button" class="more" aria-label="Offset details">&gt;&gt;</button>
              <div class="fld mid"><label for="dx1">DX:</label><input id="dx1"></div>
              <div class="fld mid"><label for="dy1">DY:</label><input id="dy1"></div>
              <div class="fld"><label for="dz1">DZ:</label><input id="dz1"></div>
              <label class="ck"><input type="checkbox">Offsets</label>
            </div>
            <div class="grp props"><button type="button" class="more" aria-label="Section details">&gt;&gt;</button>
              <div class="fld"><label for="a1">Diameter:</label><input id="a1"></div>
              <div class="fld"><label for="a2">Wt/Sch:</label><input id="a2"></div>
              <label class="ck"><input type="checkbox">Seam Welded</label>
              <div class="fld"><label for="a3">Wl Factor:</label><input id="a3" disabled></div>
              <div class="fld"><label for="a4">-Mill Tol %:</label><input id="a4" value="12.5000"></div>
              <div class="fld"><label for="a5">Corrosion:</label><input id="a5"></div>
              <div class="fld"><label for="a6">Pipe Den:</label><input id="a6"></div>
              <div class="fld"><label for="a7">Fluid Den 1:</label><input id="a7"></div>
              <div class="fld mid off"><label for="a8">Fluid Den 2:</label><input id="a8" disabled></div>
              <div class="fld off"><label for="a9">Hydro Den:</label><input id="a9" disabled></div>
            </div>
            <div class="grp temps"><button type="button" class="more" aria-label="Load details">&gt;&gt;</button>
              <div class="fld high"><label for="t1">Temp 1:</label><input id="t1"></div>
              <div class="fld high"><label for="t2">Temp 2:</label><input id="t2"></div>
              <div class="fld high"><label for="t3">Temp 3:</label><input id="t3"></div>
              <div class="fld"><label for="q1">Pressure 1:</label><input id="q1"></div>
              <div class="fld"><label for="q2">Pressure 2:</label><input id="q2"></div>
              <div class="fld"><label for="q3">Pressure 3:</label><input id="q3"></div>
              <div class="fld"><label for="q4">Hydro Press:</label><input id="q4"></div>
            </div>
          </div>

          <div class="col colb">
            <div class="cbox">
              <label class="ck"><input type="checkbox">Bend</label><label class="ck"><input type="checkbox">Reducer</label>
              <label class="ck"><input type="checkbox">Rigid</label><label class="ck"><input type="checkbox">SIFs &amp; Tees</label>
              <label class="ck"><input type="checkbox">Expansion Joint</label>
            </div>
            <div class="cbox supports">
              <label class="ck"><input type="checkbox">Restraints</label><label class="ck"><input type="checkbox">Displacements</label>
              <label class="ck"><input type="checkbox">Hangers</label><label class="ck"><input type="checkbox">Flange Checks</label>
              <label class="ck"><input type="checkbox">Nozzle Flex.</label><label class="ck"><input type="checkbox">Nozzle Lmt Check</label>
            </div>
            <div class="cbox loads">
              <label class="ck"><input type="checkbox">Forces/Moments</label>
              <label class="ck"><input type="checkbox">Uniform Loads</label>
              <label class="ck"><input type="checkbox">Wind / Wave</label>
            </div>
            <div class="grp matl"><button type="button" class="more" aria-label="Material details">&gt;&gt;</button>
              <div class="fld"><label for="mat">Material:</label><span class="combo"><select id="mat"><option></option></select></span></div>
              <label class="ck"><input type="checkbox" checked>Allowable Stress</label>
            </div>
            <div class="grp elas"><button type="button" class="more" aria-label="Elastic details">&gt;&gt;</button>
              <div class="fld"><label for="e1">Elastic Modulus (C):</label><input id="e1"></div>
              <div class="fld"><label for="e2">Elastic Modulus (H1):</label><input id="e2"></div>
              <div class="fld"><label for="e3">Elastic Modulus (H2):</label><input id="e3"></div>
              <div class="fld"><label for="e4">Elastic Modulus (H3):</label><input id="e4"></div>
              <div class="fld"><label for="e5">Poisson's Ratio:</label><input id="e5"></div>
            </div>
            <div class="grp refr"><button type="button" class="more" aria-label="Refractory details">&gt;&gt;</button>
              <div class="fld"><label for="r1">Refract Thk:</label><input id="r1"></div>
              <div class="fld"><label for="r2">Refract Density:</label><span class="combo"><select id="r2"><option></option></select></span></div>
              <div class="fld"><label for="r3">Insul Thk:</label><input id="r3"></div>
              <div class="fld"><label for="r4">Clad Thk:</label><input id="r4"></div>
              <div class="sub">
                <div class="lbls"><label for="s1">Insulation Density:</label><label for="s2">Cladding Density:</label><span>or</span><span>Insul/Cladding</span><label for="s3">Unit Weight:</label></div>
                <div class="ins"><span class="combo"><select id="s1"><option></option></select></span><input id="s2"><input id="s3"></div>
              </div>
            </div>
          </div>

          <div class="col colc">
            <div class="grp stress"><button type="button" class="more" aria-label="Stress details">&gt;&gt;</button>
              <div class="tabs" role="tablist">
                <button type="button" role="tab">Model Status</button><button type="button" role="tab" class="cur">Allowable Stresses</button><button type="button" role="tab">Bends</button><button type="button" role="tab">Displacements</button><button type="button" role="tab">Equipment Limits</button><button type="button" role="tab" class="clip">Expansic</button>
                <svg class="updn" viewBox="0 0 10 24" aria-hidden="true"><path d="M1 8l4-6 4 6z" fill="none" stroke="#ddd"/><path d="M1 15h8l-4 6z" fill="#fff"/></svg>
              </div>
              <div class="page">
                <div class="fld code"><label for="code">Code:</label><span class="drop"><select id="code"><option>B31.3</option></select><svg viewBox="0 0 20 12"><path d="M2 1l8 9 8-9"/></svg></span></div>
                <div class="fld sc mid"><label for="sc">SC:</label><input id="sc"></div>
                <div class="pairs">
                  <div class="fld"><label for="h1">SH1:</label><input id="h1"></div><div class="fld"><label for="f1">F1:</label><input id="f1"></div>
                  <div class="fld mid"><label for="h2">SH2:</label><input id="h2"></div><div class="fld mid"><label for="f2">F2:</label><input id="f2"></div>
                  <div class="fld mid"><label for="h3">SH3:</label><input id="h3"></div><div class="fld mid"><label for="f3">F3:</label><input id="f3"></div>
                  <div class="fld mid"><label for="h4">SH4:</label><input id="h4"></div><div class="fld mid"><label for="f4">F4:</label><input id="f4"></div>
                  <div class="fld"><label for="h5">SH5:</label><input id="h5"></div><div class="fld"><label for="f5">F5:</label><input id="f5"></div>
                  <div class="fld low"><label for="h6">SH6:</label><input id="h6"></div><div class="fld low"><label for="f6">F6:</label><input id="f6"></div>
                  <div class="fld low"><label for="h7">SH7:</label><input id="h7"></div><div class="fld low"><label for="f7">F7:</label><input id="f7"></div>
                  <div class="fld mid"><label for="h8">SH8:</label><input id="h8"></div><div class="fld mid"><label for="f8">F8:</label><input id="f8"></div>
                  <div class="fld low"><label for="h9">SH9:</label><input id="h9"></div><div class="fld low"><label for="f9">F9:</label><input id="f9"></div>
                </div>
                <div class="pairs spaced">
                  <div class="fld low"><label for="eff">Eff:</label><input id="eff"></div><div class="fld low"><label for="fac">Fac:</label><input id="fac" disabled></div>
                  <div class="fld low"><label for="sy">Sy:</label><input id="sy"></div><div class="fld low"><label for="pvar">PVar:</label><input id="pvar" disabled></div>
                </div>
                <fieldset><legend>&lt; f &gt; Allowed Maximum of 1.2</legend>
                  <label class="ck"><input type="radio" name="fmax">On</label>
                  <label class="ck"><input type="radio" name="fmax" checked>Off</label>
                </fieldset>
                <button type="button" class="push">Fatigue Curves...</button>
              </div>
            </div>
            <div class="grp line">
              <div class="fld"><label for="ln">Line Number :</label><span class="combo"><select id="ln"><option>unassigned</option></select></span></div>
            </div>
          </div>
        </form>
      </section>

      <section class="view">
        <div class="canvas">
          <svg class="triad" viewBox="0 0 80 80" aria-hidden="true">
            <path d="M16 60L36 34l22 26-20 8z" fill="#b8b8b8"/><path d="M37 20v32" stroke="#0a8a2a" stroke-width="4"/><path d="M31 32l6-16 6 16z" fill="#12a83a"/>
            <path d="M37 50L18 62" stroke="#a01010" stroke-width="4"/><path d="M10 66l10-10 5 7z" fill="#d01818"/>
            <path d="M37 50l19 12" stroke="#101090" stroke-width="4"/><path d="M65 66L55 56l-5 7z" fill="#1818d0"/>
            <text x="33" y="14" fill="#1db040">Y</text><text x="0" y="74" fill="#c02020">Z</text><text x="66" y="74" fill="#2020c0">X</text>
          </svg>
        </div>
        <div class="vbar"><i class="split"></i><svg viewBox="0 0 20 20"><path d="M3 14l7-9 7 9"/></svg><i class="thumb"></i><svg class="end" viewBox="0 0 20 20"><path d="M3 6l7 9 7-9"/></svg></div>
        <div class="hbar"><i class="split"></i><svg viewBox="0 0 20 20"><path d="M14 3l-8 7 8 7"/></svg><i class="thumb"></i><svg class="end" viewBox="0 0 20 20"><path d="M6 3l8 7-8 7"/></svg></div>
        <div class="corner"><svg viewBox="0 0 20 20"><path d="M15 0h5v5h-5zM8 7h5v5H8zM15 7h5v5h-5zM1 14h5v5H1zM8 14h5v5H8zM15 14h5v5h-5z" fill="#bbb"/></svg></div>
      </section>
    </div>
    <footer class="status"><span>Ready</span><span class="key push-right">大写</span><span class="key lit">数字</span><span class="key">滚动</span></footer>
  </div>

  <aside class="side right">
    <div class="sec v dim"><i class="grip"></i>
      <span class="duo"><button class="tb" aria-label="Bend"><svg><use href="#elbow"/></svg></button><button class="dd" aria-label="More bends"></button></span>
      <span class="duo"><button class="tb" aria-label="Valve"><svg><use href="#valve"/></svg></button><button class="dd" aria-label="More valves"></button></span>
      <span class="duo"><button class="tb" aria-label="Expansion joint"><svg><use href="#bellows"/></svg></button><button class="dd" aria-label="More joints"></button></span>
      <span class="duo"><button class="tb" aria-label="Reducer"><svg><use href="#reduc"/></svg></button><button class="dd" aria-label="More reducers"></button></span>
      <button class="tb" aria-label="Tee"><svg><use href="#tee"/></svg></button><i class="sp lt"></i>
      <button class="tb" aria-label="Restraint"><svg><use href="#restr"/></svg></button>
      <span class="duo"><button class="tb" aria-label="Hanger"><svg><use href="#hanger"/></svg></button><button class="dd" aria-label="More hangers"></button></span>
      <button class="tb" aria-label="Flange"><svg><use href="#flange"/></svg></button>
      <button class="tb" aria-label="Displacement"><svg><use href="#dx"/></svg></button><i class="sp lt"></i>
      <button class="tb" aria-label="Force"><svg><use href="#dn"/></svg></button>
      <button class="tb" aria-label="Wind load"><svg><use href="#wind"/></svg></button>
      <button class="tb" aria-label="Uniform load"><svg><use href="#dn3"/></svg></button><i class="sp lt"></i>
      <button class="tb" aria-label="Hatch"><svg><use href="#slash"/></svg></button>
      <button class="tb" aria-label="Node name"><svg><use href="#nodea"/></svg></button>
      <button class="tb" aria-label="Spacing"><svg><use href="#dist"/></svg></button>
      <span class="duo"><button class="tb" aria-label="Cap"><svg><use href="#cap"/></svg></button><button class="dd" aria-label="More caps"></button></span><svg class="ov"><use href="#ov"/></svg>
    </div>
    <div class="sec v"><i class="grip"></i>
      <button class="tb" aria-label="Rotate model"><svg><use href="#rcube"/></svg></button>
      <button class="tb" aria-label="Duplicate"><svg><use href="#seqr"/></svg></button>
      <button class="tb" aria-label="Remove"><svg><use href="#seqx"/></svg></button>
      <button class="tb" aria-label="Renumber"><svg><use href="#n1020"/></svg></button>
      <button class="tb" aria-label="Flip"><svg><use href="#vseq"/></svg></button>
      <button class="tb" aria-label="Block"><svg><use href="#blk"/></svg></button><svg class="ov"><use href="#ov"/></svg>
    </div>
    <div class="sec v"><i class="grip"></i>
      <button class="tb" aria-label="Solid"><svg><use href="#gem"/></svg></button><svg class="ov"><use href="#ov"/></svg>
    </div>
  </aside>
</main>

<div class="toolbar bottom" role="toolbar">
  <div class="sec"><i class="grip"></i><button class="tb" aria-label="Script"><svg><use href="#scroll"/></svg></button><button class="dd" aria-label="More scripts"></button><svg class="ov"><use href="#ov"/></svg></div>
  <div class="sec"><i class="grip"></i>
    <button class="tb" aria-label="Nodes"><svg><use href="#b1"/></svg></button>
    <button class="tb" aria-label="Deltas"><svg><use href="#b2"/></svg></button>
    <button class="tb" aria-label="Sizes"><svg><use href="#b3"/></svg></button>
    <button class="tb" aria-label="Conditions"><svg><use href="#b4"/></svg></button>
    <button class="tb" aria-label="Material"><svg><use href="#b5"/></svg></button>
    <button class="tb" aria-label="Elastic"><svg><use href="#b6"/></svg></button>
    <button class="tb" aria-label="Densities"><svg><use href="#b7"/></svg></button>
    <button class="tb" aria-label="Wind"><svg><use href="#b8"/></svg></button><svg class="ov"><use href="#ov"/></svg>
  </div>
  <div class="sec"><i class="grip"></i>
    <button class="tb" aria-label="Freehand"><svg><use href="#p1"/></svg></button>
    <button class="tb" aria-label="Rectangle"><svg><use href="#p2"/></svg></button>
    <button class="tb" aria-label="Circle"><svg><use href="#p3"/></svg></button>
    <button class="tb" aria-label="Text"><svg><use href="#p4"/></svg></button><i class="sp lt"></i>
    <button class="tb" aria-label="Callout"><svg><use href="#p5"/></svg></button><svg class="ov"><use href="#ov"/></svg>
  </div>
</div>

<footer class="taskbar">
  <button class="start" aria-label="Start"><svg viewBox="0 0 40 40"><path fill="#fff" d="M0 6l17-3v16H0zM19 3l21-3v19H19zM0 21h17v16L0 34zM19 21h21v19l-21-3z"/></svg></button>
  <label class="search"><i class="ring"></i><input type="search" placeholder="有问题尽管问我" aria-label="Search"><svg viewBox="0 0 30 44"><path fill="none" stroke="#999" stroke-width="2" d="M10 3h10v24H10zM3 22v8q0 5 5 5h14q5 0 5-5v-8M15 35v6M9 42h12"/></svg></label>
  <button class="tv" aria-label="Task view"><svg viewBox="0 0 48 40"><path fill="none" stroke="#fff" stroke-width="3" d="M9 3h30v34H9zM6 8H1v24h5M42 8h5v24h-5"/></svg></button>
  <div class="apps">
    <button aria-label="Edge"><svg viewBox="0 0 60 60"><path fill="#0a7bdc" d="M7 28Q10 4 31 4q22 0 23 26v5H22q1 12 14 12 9 0 15-4v10q-8 5-18 5Q12 57 12 36q0-13 12-19-12 3-17 11zM22 26h18q0-9-9-9-8 0-9 9z"/></svg></button>
    <button aria-label="Store"><svg viewBox="0 0 60 60"><path fill="none" stroke="#fff" stroke-width="3" d="M19 18Q19 3 30 3t11 15"/><path fill="#fff" d="M6 17l48-2v42L8 52z"/><path fill="#15100c" d="M17 25l11-1v10H17zM30 24l13-1v11H30zM17 36h11v10l-11-1zM30 36h13v12l-13-2z"/></svg></button>
    <button aria-label="Explorer"><svg viewBox="0 0 60 60"><path fill="#e9c04f" d="M4 9h22l3 5h27v34H4z"/><path fill="#fbe08a" d="M4 17h52v32H4z"/><path fill="#2b9fe0" d="M13 52V34q0-4 4-4h26q4 0 4 4v18h-9V41H22v11z"/></svg></button>
    <button class="open" aria-label="Browser"><svg viewBox="0 0 60 60"><ellipse cx="30" cy="31" rx="26" ry="27" fill="#fff"/><path fill="#3aa81c" d="M30 7q24 0 24 26H22q2 9 10 9 6 0 9-4h11q-5 17-21 17Q8 54 8 31 8 8 30 7zM22 26h19q-2-8-9-8t-10 8z"/><path fill="none" stroke="#4db52a" stroke-width="4" d="M56 4Q40-2 18 24T12 58"/></svg></button>
    <button aria-label="Cloud"><svg viewBox="0 0 60 60" fill="none" stroke="#fff" stroke-width="8"><circle cx="30" cy="18" r="10"/><circle cx="15" cy="39" r="10"/><path d="M38 31a10 10 0 1 1 3 18"/></svg></button>
    <button aria-label="Music"><svg viewBox="0 0 60 60"><path fill="#e60c12" d="M0 0h60v60H0z"/><path fill="none" stroke="#fff" stroke-width="4" d="M24 16Q11 24 12 36t18 13 17-14-14-15q-11 2-11 11t8 8 5-9L30 16q0-8 10-4"/></svg></button>
    <button class="open" aria-label="Wi-Fi"><svg viewBox="0 0 60 60"><rect width="60" height="60" rx="10" fill="#0d6bb8"/><circle cx="30" cy="30" r="25" fill="none" stroke="#2f9ad6" stroke-width="2"/><path fill="none" stroke="#fff" stroke-width="4" d="M13 28q17-16 34 0M20 35q10-9 20 0"/><circle cx="30" cy="42" r="4" fill="#fff"/></svg></button>
    <button aria-label="Input"><svg viewBox="0 0 60 60"><path d="M12 0h48v48q0 12-12 12H12Q0 60 0 48V12Q0 0 12 0z" fill="#2e8ee8"/><path fill="none" stroke="#fff" stroke-width="5" d="M38 17l10-1q1 18-10 22L22 46l-4-9"/><circle cx="23" cy="20" r="7" fill="none" stroke="#fff" stroke-width="5"/><path stroke="#fff" stroke-width="5" d="M30 14v17"/></svg></button>
    <button class="open" aria-label="CAESAR"><svg><use href="#c2"/></svg></button>
    <button class="open active" aria-label="CAESAR input"><svg><use href="#c2"/></svg></button>
    <span class="mark">海川化工论坛</span>
  </div>
  <div class="tray">
    <svg viewBox="0 0 80 40"><path d="M24 30l16-18 16 18"/></svg>
    <svg viewBox="0 0 80 40"><path d="M30 10h30v22H32M63 17v8M20 6v6M28 6v6M18 12h12v5q-2 5-6 5t-6-5zM24 22v10h6"/><path fill="#fff" d="M34 14h22v14H34z"/></svg>
    <svg viewBox="0 0 80 40"><path d="M25 36Q27 10 55 6M32 36Q34 18 55 14M40 36Q42 27 55 23"/><circle cx="52" cy="34" r="3" fill="#fff"/></svg>
    <svg viewBox="0 0 80 40"><path d="M21 14h5l9-8v28l-9-8h-5zM40 14q4 6 0 12M46 10q7 10 0 20"/><path stroke="#777" d="M53 6q10 14 0 28"/></svg>
    <svg class="kb" viewBox="0 0 96 40"><path d="M15 2h66v36H15z"/><path stroke-dasharray="3 3" d="M23 11h50"/><path stroke-dasharray="5 3" d="M23 20h50"/><path d="M23 29h7M35 29h26M66 29h7"/></svg>
    <span class="ime">英</span>
    <span class="mode"><b>M</b></span>
    <time>18:13<br>2017/1/21</time>
    <svg class="nt" viewBox="0 0 80 44"><path d="M20 3h39v34h-14l-6 6-5-6H20z"/></svg>
    <i class="peek"></i>
  </div>
</footer>
</body>
</html>
```
FILE: styles.css
```css
* { box-sizing: border-box; }
body {
  margin: 0;
  min-height: 100vh;
  display: flex;
  flex-direction: column;
  background: #525252;
  color: #000;
  font-family: "Open Sans", "Noto Sans CJK SC", sans-serif;
  overflow-x: hidden;
}
button { font: inherit; color: inherit; background: none; border: 0; padding: 0; margin: 0; }
i { display: block; flex: none; }
svg { display: block; flex: none; }
.paints { position: absolute; width: 0; height: 0; }
.sprite { display: none; }

/* icon strokes and fills */
.l, .l3, .l4 { fill: none; stroke: currentColor; stroke-width: 2; }
.l3 { stroke-width: 3; }
.l4 { stroke-width: 4; }
.f { fill: currentColor; }
.w { fill: var(--paper, #f2f4f6); stroke: currentColor; stroke-width: 1; }
.w2 { fill: var(--paper, #dfe6ee); stroke: currentColor; stroke-width: 2; }
.w3 { fill: none; stroke: currentColor; stroke-width: 2; }
.wl { fill: none; stroke: #fff; stroke-width: 2; }
.r, .r3, .r1 { fill: none; stroke: #c00d12; stroke-width: 2; }
.r3 { stroke-width: 3; }
.r1 { stroke-width: 1; }
.hat { fill: none; stroke: var(--hatch, #b01018); stroke-width: 2; }
.pk { fill: none; stroke: #d98a8e; stroke-width: 1; }
.dash { stroke-dasharray: 3 2; stroke-width: 1; }
.tr, .ts, .tg, .tw { font: bold 12px "Liberation Sans", sans-serif; fill: #b01018; }
.ts { fill: #34465c; }
.tg { font-size: 16px; fill: #777; }
.tw { fill: #fff; font-size: 11px; }
.ta { font: bold 20px "Liberation Sans", sans-serif; fill: #c00d12; }
.te { font: bold 24px "Liberation Serif", serif; fill: #a01018; }
.trh { font: 16px "Liberation Serif", serif; fill: #a01018; }
.rho { font: 26px "Liberation Serif", serif; fill: #34465c; }
.c2t { font: bold 24px "Liberation Sans", sans-serif; fill: #3f4d22; }

/* title bar */
.titlebar { display: flex; align-items: center; height: 46px; background: #fff; padding-left: 2px; }
.applogo { width: 40px; height: 40px; }
.titlebar h1 { margin: 0 auto 0 6px; font-size: 34px; font-weight: 400; line-height: 40px; }
.winbtns { display: flex; margin-right: 3px; }
.winbtns button { width: 94px; height: 46px; display: grid; place-items: center; }
.winbtns svg { width: 22px; height: 22px; fill: none; stroke: #000; stroke-width: 2; }

/* menu bar */
.menubar { display: flex; align-items: center; height: 47px; color: #f2f2f2; font-size: 25px; padding-left: 5px; }
.menubar .grip { height: 34px; margin: 0; }
.menubar button { margin: 0 13px 0 3px; line-height: 40px; }
.brand { margin-left: auto; width: 88px; color: #bbb; position: relative; text-align: right; font: 12px/14px "Liberation Sans", sans-serif; padding-top: 4px; }
.brand span { padding-right: 2px; }
.brand svg { position: absolute; left: 0; top: -6px; width: 86px; height: 20px; fill: none; stroke: #aaa; stroke-width: 1; }

/* tool bars */
.toolbar { display: flex; height: 42px; border-bottom: 1px solid #555; color: #3a4a5e; }
.sec { display: flex; flex: none; align-items: stretch; background: linear-gradient(#c8c8c8, #a8a8a8); border-right: 1px solid #555; border-top: 1px solid #ddd; }
.grip { width: 10px; border-left: 2px dotted #222; border-right: 0; background: none; }
.sec > .grip { width: 6px; margin: 4px 0 4px 4px; }
.sec > .ov { width: 12px; height: 12px; padding: 1px; align-self: flex-end; }
.tb { width: 38px; display: grid; place-items: center; flex: none; }
.tb svg { width: 30px; height: 30px; }
.dd { width: 29px; display: grid; place-items: center; flex: none; }
.dd::after { content: ""; border: 3px solid transparent; border-top: 4px solid #666; border-bottom: 0; }
.on { background: #fbd55e; border: 1px solid #e0b030; }
.dim { color: #5e5e5e; --paper: #d4d4d4; --hatch: #5e5e5e; }
.cubes { --paper: none; }
.sp { width: 6px; padding: 3px 2px; }
.sp::after { content: ""; display: block; height: 100%; border-left: 1px solid #999; }
.lt::after { border-left-color: #fff; }

/* main area */
.main { flex: 1; display: flex; align-items: stretch; }
.side { flex: none; color: #3a4a5e; }
.left { width: 42px; }
.right { width: 73px; padding: 0 2px; }
.sec.v { flex-direction: column; background: linear-gradient(90deg, #d0d0d0, #aaa); border: 0; border-bottom: 1px solid #555; border-right: 1px solid #777; }
.sec.v > .grip { width: auto; height: 6px; margin: 5px 4px 0; border: 0; border-top: 2px dotted #222; }
.v .tb { width: 100%; height: 38px; }
.v .duo { display: flex; height: 38px; }
.v .duo .tb { width: 38px; }
.v .sp { width: auto; height: 6px; padding: 2px 3px; }
.v .sp::after { border: 0; border-top: 2px solid #f4f4f4; }
.v > .ov { transform: rotate(-90deg); }
.center { flex: 1; min-width: 0; display: flex; flex-direction: column; }
.work { flex: 1; display: flex; }
.panel { flex: none; width: 2005px; background: #f0f0f0; display: flex; flex-direction: column; }
.panelhead { display: flex; height: 47px; align-items: center; padding: 0 9px 0 6px; background: linear-gradient(#ffd68a, #ffb75f 50%, #fea850); color: #4c3a22; }
.panelhead h2 { margin: 0 auto 0 0; font-size: 31px; font-weight: 400; line-height: 40px; }
.pin svg { width: 8px; height: 16px; fill: none; stroke: #222; stroke-width: 1; }

/* form */
.form { display: grid; grid-template-columns: 418px 598px 896px; column-gap: 14px; padding-left: 24px; font: 11px/14px "Liberation Sans", sans-serif; }
.form label, .form legend, .form span { white-space: nowrap; }
.cola { padding: 15px 6px 0 0; }
.colb { padding-top: 29px; }
.colc { padding-top: 10px; }
.grp { position: relative; border: 1px solid #dedede; margin-bottom: 8px; }
.grp.tight { margin-bottom: 4px; }
.more { position: absolute; right: 4px; top: -7px; padding: 0 3px; background: #f0f0f0; font-size: 11px; line-height: 14px; }
.form input { display: block; flex: none; margin: 0; width: 160px; height: 48px; border: 1px solid #7a7a7a; background: #fff; padding: 3px 2px 29px; font: inherit; color: #000; outline: 0; }
.form input:disabled { background: #f0f0f0; border-color: #ccc; }
.form input.sel { border-color: #2a80c8; color: #fff; background: linear-gradient(#2f8fdc, #2f8fdc) no-repeat 2px 4px / 13px 13px #fff; }
.fld { display: flex; align-items: flex-start; gap: 8px; }
.fld label { text-align: right; padding-top: 8px; flex: none; }
.high label { padding-top: 4px; }
.mid label { padding-top: 12px; }
.low label { padding-top: 16px; }
.off label { color: #a0a0a0; padding-right: 4px; }
.ck { display: flex; align-items: flex-start; gap: 4px; }
.form .ck input { appearance: none; width: 32px; height: 32px; border: 2px solid #333; padding: 0; display: grid; place-items: center; }
.ck input[type=checkbox]:checked::after { content: ""; width: 10px; height: 20px; border: solid #333; border-width: 0 2px 2px 0; transform: rotate(40deg); margin-top: -6px; }
.form .ck input[type=radio] { border-radius: 50%; }
.ck input[type=radio]:checked::after { content: ""; width: 18px; height: 18px; border-radius: 50%; background: #333; }
.lbls { display: flex; flex-direction: column; text-align: right; }

.nodes { display: flex; height: 136px; padding: 20px 0 0; }
.nodes .lbls { width: 96px; padding-top: 8px; gap: 38px; margin-right: 19px; }
.nodes .ins { display: flex; flex-direction: column; gap: 16px; margin-right: 8px; }
.nodes .ck { padding-top: 40px; }
.deltas { height: 252px; padding-top: 28px; display: grid; grid-template-rows: 56px 56px 64px 32px; }
.deltas .fld { gap: 19px; }
.deltas .fld label { width: 96px; }
.deltas .fld input { width: 224px; }
.deltas .ck, .props .ck { padding-left: 115px; }
.props { height: 615px; padding-top: 24px; display: grid; grid-template-rows: 64px 64px 40px 64px 60px 60px 56px 60px 60px; }
.props .fld label, .temps .fld label { width: 171px; }
.temps { height: 420px; padding-top: 37px; margin: 0; display: grid; grid-template-rows: 52px 52px 52px 52px 56px 52px 48px; align-content: start; }

.cbox { border: 1px solid #a8a8a8; height: 150px; margin-bottom: 5px; padding: 14px 0 0 19px; display: grid; grid-template-columns: 284px 1fr; grid-template-rows: 44px 44px 44px; }
.cbox.supports { height: 147px; }
.cbox.loads { grid-template: 48px 48px 32px / 1fr; padding-top: 11px; margin-bottom: 9px; }
.matl { height: 139px; padding-top: 32px; margin-bottom: 4px; display: grid; grid-template-rows: 64px 32px; }
.matl .fld { gap: 15px; }
.matl .fld label { width: 128px; }
.matl .combo { width: 440px; }
.matl .ck { padding-left: 19px; }
.elas { height: 327px; padding-top: 17px; margin-bottom: 2px; display: grid; grid-template-rows: repeat(5, 60px); align-content: start; }
.elas .fld, .refr > .fld { gap: 12px; }
.elas label, .refr > .fld label { width: 287px; }
.elas input, .refr input { width: 236px; }
.refr { height: 491px; padding-top: 20px; margin: 0; display: grid; grid-template-rows: 56px 60px 56px 47px 231px; }
.refr .combo { width: 284px; }
.sub { border: 1px solid #dedede; margin: 0 5px 0 15px; padding-top: 20px; display: flex; z-index: 0; }
.refr > .fld { z-index: 1; }
.sub .lbls { width: 267px; padding-top: 8px; margin-right: 16px; }
.sub .lbls > * { height: 32px; }
.sub .lbls > :first-child { height: 56px; }
.sub .lbls > :nth-child(4) { height: 40px; }
.sub .combo { margin-bottom: 35px; }
.sub input + input { margin-top: 40px; }

.combo { display: flex; height: 21px; border: 1px solid #a0a0a0; background: #fff; position: relative; }
.combo::after { content: ""; width: 14px; background: linear-gradient(#777, #777) center / 4px 3px no-repeat #c4c4c4; border-left: 1px solid #aaa; }
.combo select { flex: 1; }
select { appearance: none; border: 0; background: none; font: inherit; color: #000; padding: 0 3px; outline: 0; margin: 0; min-width: 0; }

.stress { display: flex; padding: 29px 11px 10px; height: 1229px; margin-bottom: 15px; }
.tabs { width: 43px; background: #6e6e6e; color: #f0f0f0; font: 30px/40px "Liberation Sans", sans-serif; display: flex; flex-direction: column; overflow: hidden; }
.tabs button { writing-mode: vertical-rl; width: 43px; flex: none; text-align: left; padding: 7px 0; white-space: nowrap; }
.tabs button:first-child { padding: 10px 0 7px; }
.tabs .cur { background: #d2d2d2; color: #000; font-weight: 700; padding: 4px 0; margin-left: 1px; border-radius: 3px; width: 42px; }
.tabs .clip { padding-bottom: 0; }
.updn { width: 10px; height: 24px; margin: auto 0 6px 16px; }
.page { flex: 1; border: 1px solid #444; border-bottom: 2px solid #666; padding-top: 21px; }
.code { height: 60px; gap: 69px; }
.code label { width: 151px; padding-top: 3px; }
.drop { display: flex; align-items: center; width: 351px; height: 20px; border: 1px solid #adadad; background: #e1e1e1; padding-right: 10px; }
.drop select { flex: 1; }
.drop svg { width: 20px; height: 12px; fill: none; stroke: #444; stroke-width: 2; }
.sc { height: 76px; gap: 17px; }
.sc label { width: 267px; }
.form .page .fld input { height: 56px; padding-bottom: 37px; }
.pairs { display: grid; grid-template-columns: 324px 268px; }
.pairs .fld { gap: 21px; }
.pairs .fld label { width: 143px; }
.pairs .fld:nth-child(even) { gap: 13px; }
.pairs .fld:nth-child(even) label { width: 95px; }
.spaced { margin-top: 28px; row-gap: 7px; }
fieldset { margin: 20px 0 0 164px; width: 436px; height: 135px; border: 1px solid #dcdcdc; padding: 30px 0 0 159px; display: grid; grid-template-rows: 44px 32px; align-content: start; }
legend { margin-left: -152px; padding: 0 2px; line-height: 14px; }
.push { display: block; margin: 115px 0 0 257px; width: 229px; height: 54px; border: 1px solid #adadad; background: #e1e1e1; }
.line { height: 204px; padding-top: 81px; margin: 0; }
.line .fld { gap: 17px; }
.line label { width: 206px; }
.line .combo { width: 620px; }

/* drawing view */
.view { flex: 1; min-width: 0; margin-left: 4px; display: grid; grid-template-columns: 1fr 42px; grid-template-rows: 1fr 45px; background: #f0f0f0; border-top: 2px solid #777; }
.canvas { background: #ffffe5; display: flex; align-items: flex-end; padding: 0 0 40px 30px; }
.triad { width: 74px; height: 74px; font: 14px "Liberation Sans", sans-serif; }
.vbar, .hbar { display: flex; align-items: center; }
.vbar { flex-direction: column; }
.vbar svg, .hbar svg { width: 20px; height: 20px; fill: none; stroke: #555; stroke-width: 4; margin: 12px 0; }
.hbar { padding-bottom: 3px; }
.hbar svg { margin: 0 12px; }
.vbar .end { margin-top: auto; }
.hbar .end { margin-left: auto; }
.vbar .thumb { width: 42px; height: 43px; background: #cdcdcd; }
.hbar .thumb { width: 43px; height: 42px; background: #cdcdcd; }
.vbar .split { width: 42px; height: 6px; border: 1px solid #666; }
.hbar .split { width: 6px; height: 42px; border: 1px solid #777; }
.corner { display: grid; place-items: center; }
.corner svg { width: 20px; height: 20px; }

.status { height: 46px; border-top: 2px solid #2a2a2a; background: linear-gradient(#4a4a4a, #303030); color: #f0f0f0; font-size: 28px; line-height: 40px; display: flex; align-items: center; padding: 0 0 0 4px; }
.key { font-size: 32px; color: #6e6e6e; padding: 0 4px; height: 42px; }
.key.lit { color: #fff; border-left: 1px solid #fff; border-right: 1px solid #fff; }
.push-right { margin-left: auto; }

/* task bar */
.taskbar { display: flex; height: 100px; background: #120d0a; color: #fff; align-items: stretch; }
.start { width: 120px; display: grid; place-items: center; }
.start svg { width: 40px; height: 40px; }
.search { width: 860px; background: #323232; display: flex; align-items: center; padding: 0 34px 0 24px; }
.ring { width: 64px; height: 64px; border: 7px solid #fff; border-radius: 50%; outline: 2px solid #999; outline-offset: -2px; }
.search input { flex: 1; min-width: 0; height: 60px; border: 0; background: none; font: 38px/56px "Noto Sans CJK SC", sans-serif; padding: 0 0 0 14px; color: #ddd; outline: 0; }
.search input::placeholder { color: #9c9c9c; }
.search svg { width: 34px; height: 44px; }
.tv { width: 120px; display: grid; place-items: center; }
.tv svg { width: 48px; height: 38px; }
.apps { display: flex; gap: 4px; margin-left: 8px; position: relative; }
.apps button { width: 120px; display: grid; place-items: center; }
.apps svg { width: 60px; height: 60px; }
.apps .open { background: linear-gradient(#76b9ed, #76b9ed) no-repeat center bottom / 101px 5px; }
.apps .active { background: linear-gradient(#76b9ed, #76b9ed) no-repeat center bottom / 120px 5px #3a3733; }
.mark { position: absolute; left: 745px; top: 60px; font-size: 22px; line-height: 32px; color: #2a2a9c; font-weight: 700; white-space: nowrap; }
.tray { display: flex; align-items: center; margin-left: auto; }
.tray svg { width: 80px; height: 40px; fill: none; stroke: #fff; stroke-width: 2; }
.tray .kb { width: 96px; stroke-width: 3; }
.ime { width: 60px; text-align: center; font-size: 38px; line-height: 48px; }
.mode { width: 86px; display: grid; place-items: center; }
.mode b { width: 38px; height: 38px; background: #fff; color: #111; font-weight: 400; font-size: 38px; line-height: 38px; text-align: center; }
.tray time { width: 190px; text-align: center; font-size: 31px; line-height: 47px; }
.tray .nt { height: 44px; width: 100px; margin-right: 21px; }
.peek { width: 11px; height: 100px; border-left: 2px solid #777; }
```
